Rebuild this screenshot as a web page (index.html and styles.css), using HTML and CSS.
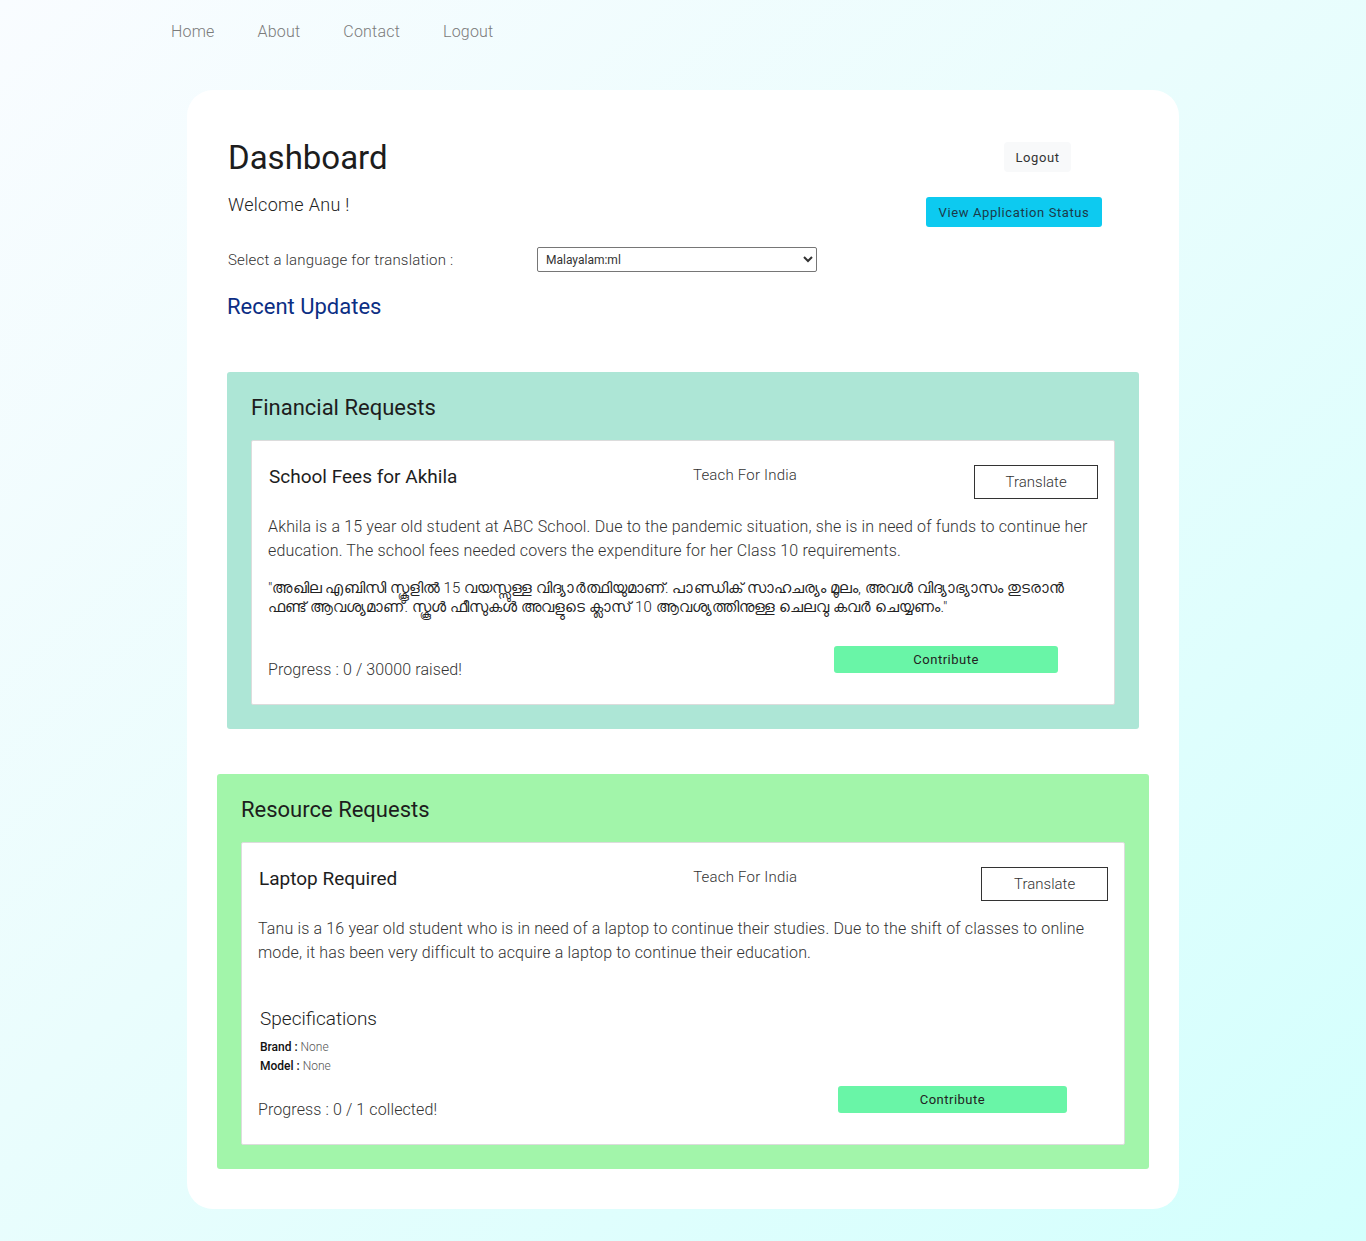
FILE: index.html
```html
<!DOCTYPE html>
<html lang="en">
<head>
<meta charset="utf-8">
<title>Dashboard</title>
<link rel="stylesheet" href="styles.css">
</head>
<body>
<nav class="topnav">
  <a href="#">Home</a>
  <a href="#">About</a>
  <a href="#">Contact</a>
  <a href="#">Logout</a>
</nav>

<main class="panel">
  <header class="panel-head">
    <div class="head-left">
      <h1 class="title">Dashboard</h1>
      <p class="welcome">Welcome Anu !</p>
      <div class="lang-row">
        <label class="lang-label" for="lang">Select a language for translation :</label>
        <select id="lang" class="lang-select">
          <option>Malayalam:ml</option>
        </select>
      </div>
    </div>
    <div class="head-right">
      <button class="btn-light">Logout</button>
      <button class="btn-info">View Application Status</button>
    </div>
  </header>

  <h2 class="recent">Recent Updates</h2>

  <section class="group group-fin">
    <h3 class="group-title">Financial Requests</h3>
    <article class="req">
      <div class="req-head">
        <h4 class="req-title">School Fees for Akhila</h4>
        <span class="req-org">Teach For India</span>
        <button class="btn-outline">Translate</button>
      </div>
      <p class="req-desc">Akhila is a 15 year old student at ABC School. Due to the pandemic situation, she is in need of funds to continue her education. The school fees needed covers the expenditure for her Class 10 requirements.</p>
      <p class="req-trans">"അഖില എബിസി സ്കൂളിൽ 15 വയസ്സുള്ള വിദ്യാർത്ഥിയുമാണ്. പാണ്ഡിക് സാഹചര്യം മൂലം, അവൾ വിദ്യാഭ്യാസം തുടരാൻ ഫണ്ട് ആവശ്യമാണ്. സ്കൂൾ ഫീസുകൾ അവളുടെ ക്ലാസ് 10 ആവശ്യത്തിനുള്ള ചെലവു കവർ ചെയ്യണം."</p>
      <div class="req-foot req-foot-fin">
        <span class="progress">Progress : 0 / 30000 raised!</span>
        <button class="btn-green">Contribute</button>
      </div>
    </article>
  </section>

  <section class="group group-res">
    <h3 class="group-title">Resource Requests</h3>
    <article class="req">
      <div class="req-head">
        <h4 class="req-title">Laptop Required</h4>
        <span class="req-org">Teach For India</span>
        <button class="btn-outline">Translate</button>
      </div>
      <p class="req-desc">Tanu is a 16 year old student who is in need of a laptop to continue their studies. Due to the shift of classes to online mode, it has been very difficult to acquire a laptop to continue their education.</p>
      <h5 class="spec-title">Specifications</h5>
      <p class="spec"><b>Brand :</b> None</p>
      <p class="spec"><b>Model :</b> None</p>
      <div class="req-foot req-foot-res">
        <span class="progress">Progress : 0 / 1 collected!</span>
        <button class="btn-green">Contribute</button>
      </div>
    </article>
  </section>
</main>
</body>
</html>
```

FILE: styles.css
```css
* { box-sizing: border-box; }

html, body {
  margin: 0;
  padding: 0;
}

body {
  min-height: 1241px;
  font-family: Roboto, "Liberation Sans", "Noto Sans", sans-serif;
  font-weight: 300;
  color: #222;
  background: linear-gradient(to bottom right, #f9fcff 0%, #eafdfd 45%, #d3fffd 100%);
  padding-bottom: 32px;
}

.topnav {
  display: flex;
  gap: 43px;
  padding: 21px 0 0 171px;
  height: 90px;
}

.topnav a {
  color: #7b7b7b;
  text-decoration: none;
  font-size: 16px;
  line-height: 22px;
  letter-spacing: 0.2px;
}

.panel {
  width: 992px;
  margin-left: 187px;
  background: #fff;
  border-radius: 26px;
  padding: 48px 40px 40px 40px;
  min-height: 1119px;
}

.panel-head {
  display: flex;
  justify-content: space-between;
}

.head-left { padding-left: 1px; }

.title {
  margin: 0;
  font-size: 33px;
  font-weight: 400;
  line-height: 40px;
  color: #1d1d1d;
}

.welcome {
  margin: 15px 0 0 0;
  font-size: 18px;
  line-height: 24px;
  color: #222;
  letter-spacing: 0.3px;
}

.lang-row {
  display: flex;
  align-items: center;
  margin-top: 30px;
}

.lang-label {
  width: 309px;
  font-size: 15px;
  color: #333;
  letter-spacing: 0.2px;
}

.lang-select {
  width: 280px;
  height: 25px;
  font-family: inherit;
  font-size: 12px;
  color: #333;
  border: 1px solid #767676;
  border-radius: 2px;
  background: #fff;
  padding: 0 4px;
}

.head-right {
  display: flex;
  flex-direction: column;
  align-items: flex-end;
  padding-top: 4px;
  margin-right: 37px;
}

.btn-light {
  background: #f8f9fa;
  border: none;
  border-radius: 4px;
  font-family: inherit;
  font-size: 13px;
  font-weight: 400;
  letter-spacing: 0.6px;
  color: #333;
  width: 67px;
  height: 30px;
  margin-right: 31px;
}

.btn-info {
  margin-top: 25px;
  background: #0dcaf0;
  border: none;
  border-radius: 3px;
  font-family: inherit;
  font-size: 13px;
  font-weight: 400;
  letter-spacing: 0.6px;
  color: #1b3a4a;
  width: 176px;
  height: 30px;
}

.recent {
  margin: 20px 0 0 0;
  font-size: 22px;
  font-weight: 400;
  line-height: 30px;
  color: #0c2e84;
}

.group {
  padding: 22px 24px 24px 24px;
  border-radius: 3px;
}

.group-fin {
  background: #ade6d6;
  margin-top: 50px;
}

.group-res {
  background: #a2f5aa;
  margin: 45px -10px 0 -10px;
}

.group-title {
  margin: 0 0 18px 0;
  font-size: 22px;
  font-weight: 400;
  line-height: 28px;
  color: #1d1d1d;
}

.req {
  background: #fff;
  border: 1px solid #dcdcdc;
  border-radius: 2px;
  padding: 24px 16px 24px 16px;
}

.req-head {
  display: grid;
  grid-template-columns: 51.2% 33.9% 14.9%;
  align-items: start;
}

.req-title {
  margin: 0;
  padding: 0 0 0 1px;
  font-size: 19px;
  font-weight: 400;
  line-height: 24px;
  color: #1d1d1d;
}

.req-org {
  font-size: 15px;
  line-height: 20px;
  color: #333;
  letter-spacing: 0.2px;
}

.btn-outline {
  background: #fff;
  border: 1px solid #333;
  border-radius: 0;
  font-family: inherit;
  font-size: 15px;
  font-weight: 300;
  color: #333;
  height: 34px;
  width: 100%;
}

.req-desc {
  margin: 16px 0 0 0;
  font-size: 16px;
  line-height: 24px;
  color: #333;
  letter-spacing: 0.15px;
}

.req-trans {
  margin: 16px 0 0 0;
  font-size: 15px;
  line-height: 19px;
  color: #222;
  letter-spacing: 0.1px;
}

.req-foot {
  display: grid;
  grid-template-columns: 68.2% 27%;
  align-items: end;
}

.req-foot-fin { margin-top: 29px; }
.req-foot-res { margin-top: 10px; }

.progress {
  font-size: 16px;
  line-height: 20px;
  color: #333;
  letter-spacing: 0.1px;
}

.btn-green {
  background: #69f5a7;
  border: none;
  border-radius: 3px;
  font-family: inherit;
  font-size: 13px;
  font-weight: 400;
  letter-spacing: 0.5px;
  color: #222;
  height: 27px;
  margin-bottom: 7px;
}

.spec-title {
  margin: 41px 0 6px 2px;
  font-size: 19px;
  font-weight: 300;
  line-height: 26px;
  color: #222;
}

.spec {
  margin: 0 0 0 2px;
  font-size: 12px;
  line-height: 19px;
  color: #555;
}

.spec b {
  font-weight: 500;
  color: #111;
}
```
